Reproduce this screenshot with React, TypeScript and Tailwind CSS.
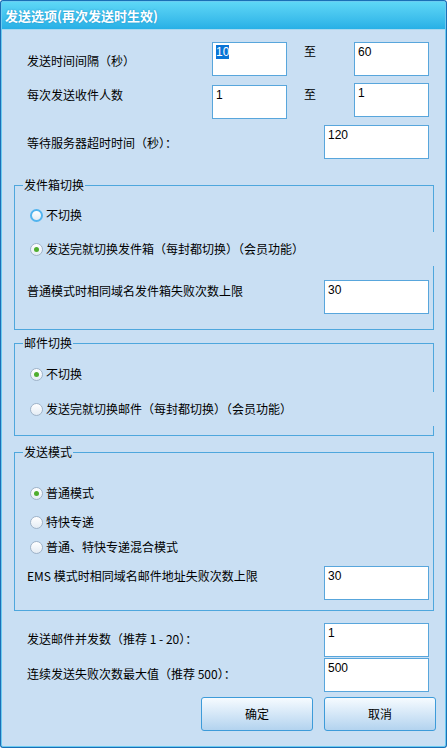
import React from 'react';

const cjk = { fontFamily: '"Noto Sans CJK SC", "Noto Sans", sans-serif' };

function Field({ value, selected, className = '' }: { value: string; selected?: boolean; className?: string }) {
  return (
    <div className={`h-[34px] bg-white border border-[#58a6dc] pl-[3px] pt-[2px] text-[12px] leading-[14px] text-black font-['Liberation_Sans',sans-serif] ${className}`}>
      {selected ? <span className="bg-[#0a74d6] text-white">{value}</span> : value}
    </div>
  );
}

function Radio({ checked, hover, label, tall, className = '' }: { checked?: boolean; hover?: boolean; label: string; tall?: boolean; className?: string }) {
  return (
    <div className={`flex items-center pl-[15px] ${tall ? 'h-[34px] -mr-[1px] bg-[#c9dff3]' : 'h-[20px]'} ${className}`}>
      <span
        className={`relative w-[13px] h-[13px] rounded-full bg-gradient-to-b from-white to-[#e4ecf4] ${
          hover ? 'border-2 border-[#52b4ee]' : 'border border-[#9fb3c8]'
        }`}
      >
        {checked && <span className="absolute left-1/2 top-1/2 w-[5px] h-[5px] -ml-[2.5px] -mt-[2.5px] rounded-full bg-[#4fae2e]" />}
      </span>
      <span className="ml-[3px] text-[12px] leading-[16px] text-black">{label}</span>
    </div>
  );
}

function Group({ title, className = '', children }: { title: string; className?: string; children: React.ReactNode }) {
  return (
    <fieldset className={`ml-[12px] w-[420px] border border-[#4ea7dd] ${className}`}>
      <legend className="ml-[8px] px-[1px] text-[12px] leading-[16px] text-black">{title}</legend>
      {children}
    </fieldset>
  );
}

export default function App() {
  return (
    <div className="w-[447px] h-[748px] bg-[#1a6fb6] p-[1px] rounded-[3px]" style={cjk}>
      <div className="w-full h-full border border-[#6acbf1] rounded-[2px] flex flex-col bg-[#c9dff3]">
        <div className="h-[28px] shrink-0 bg-gradient-to-b from-[#5dd7f6] to-[#27b0e6] border-b border-[#a8d8f0] flex items-center pl-[3px]">
          <span className="text-white font-bold text-[13px] leading-[16px] [text-shadow:0_0_2px_#1c8fc8]">发送选项(再次发送时生效)</span>
        </div>

        <div className="flex-1">
          <div className="flex items-start h-[34px] mt-[12px] pl-[25px]">
            <div className="w-[185px] pt-[11px] text-[12px] leading-[16px]">发送时间间隔（秒）</div>
            <Field value="10" selected className="w-[75px]" />
            <div className="w-[67px] pl-[17px] pt-[1px] text-[12px] leading-[16px]">至</div>
            <Field value="60" className="w-[75px]" />
          </div>

          <div className="flex items-start h-[36px] mt-[7px] pl-[25px]">
            <div className="w-[185px] pt-[4px] text-[12px] leading-[16px]">每次发送收件人数</div>
            <Field value="1" className="w-[75px] mt-[2px]" />
            <div className="w-[67px] pl-[17px] pt-[3px] text-[12px] leading-[16px]">至</div>
            <Field value="1" className="w-[75px]" />
          </div>

          <div className="flex items-start h-[34px] mt-[6px] pl-[25px]">
            <div className="w-[297px] pt-[10px] text-[12px] leading-[16px]">等待服务器超时时间（秒）：</div>
            <Field value="120" className="w-[105px]" />
          </div>

          <Group title="发件箱切换" className="mt-[18px] pb-[15px]">
            <Radio hover label="不切换" className="mt-[12px]" />
            <Radio checked tall label="发送完就切换发件箱（每封都切换）（会员功能）" className="mt-[7px]" />
            <div className="flex items-start mt-[14px] pl-[12px] pr-[4px]">
              <div className="flex-1 pt-[3px] text-[12px] leading-[16px]">普通模式时相同域名发件箱失败次数上限</div>
              <Field value="30" className="w-[105px]" />
            </div>
          </Group>

          <Group title="邮件切换" className="mt-[5px] pb-[9px]">
            <Radio checked label="不切换" className="mt-[13px]" />
            <Radio tall label="发送完就切换邮件（每封都切换）（会员功能）" className="mt-[8px]" />
          </Group>

          <Group title="发送模式" className="mt-[8px] pb-[10px]">
            <Radio checked label="普通模式" className="mt-[23px]" />
            <Radio label="特快专递" className="mt-[9px]" />
            <Radio label="普通、特快专递混合模式" className="mt-[5px]" />
            <div className="flex items-start mt-[9px] pl-[12px] pr-[4px]">
              <div className="flex-1 pt-[2px] text-[12px] leading-[16px]">EMS 模式时相同域名邮件地址失败次数上限</div>
              <Field value="30" className="w-[105px]" />
            </div>
          </Group>

          <div className="flex items-start mt-[12px] pl-[25px]">
            <div className="w-[297px] pt-[8px] text-[12px] leading-[16px]">发送邮件并发数（推荐 1 - 20）：</div>
            <Field value="1" className="w-[105px]" />
          </div>
          <div className="flex items-start mt-[1px] pl-[25px]">
            <div className="w-[297px] pt-[8px] text-[12px] leading-[16px]">连续发送失败次数最大值（推荐 500）：</div>
            <Field value="500" className="w-[105px]" />
          </div>

          <div className="flex justify-end gap-[11px] pr-[9px] mt-[5px]">
            <button className="w-[112px] h-[34px] rounded-[3px] border border-[#3d9bd9] bg-gradient-to-b from-[#f6fbff] to-[#b3d3ef] text-[12px] leading-[16px] text-black">
              确定
            </button>
            <button className="w-[112px] h-[34px] rounded-[3px] border border-[#3d9bd9] bg-gradient-to-b from-[#f6fbff] to-[#b3d3ef] text-[12px] leading-[16px] text-black">
              取消
            </button>
          </div>
        </div>
      </div>
    </div>
  );
}
